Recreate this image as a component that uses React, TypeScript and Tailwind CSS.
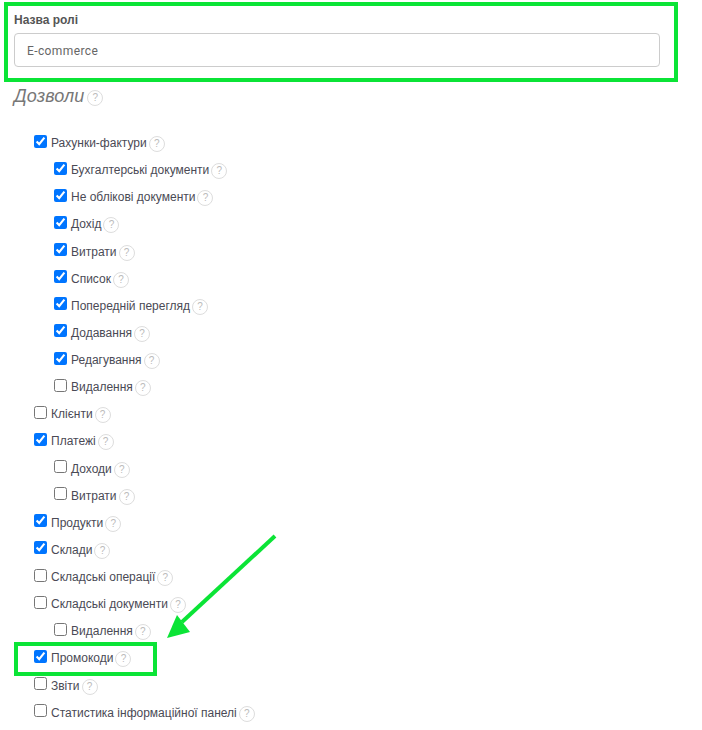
import { useState } from 'react';

type Permiso = { nombre: string; marcado?: boolean; nivel?: 1 };

const permisos: Permiso[] = [
  { nombre: 'Рахунки-фактури', marcado: true },
  { nombre: 'Бухгалтерські документи', marcado: true, nivel: 1 },
  { nombre: 'Не облікові документи', marcado: true, nivel: 1 },
  { nombre: 'Дохід', marcado: true, nivel: 1 },
  { nombre: 'Витрати', marcado: true, nivel: 1 },
  { nombre: 'Список', marcado: true, nivel: 1 },
  { nombre: 'Попередній перегляд', marcado: true, nivel: 1 },
  { nombre: 'Додавання', marcado: true, nivel: 1 },
  { nombre: 'Редагування', marcado: true, nivel: 1 },
  { nombre: 'Видалення', nivel: 1 },
  { nombre: 'Клієнти' },
  { nombre: 'Платежі', marcado: true },
  { nombre: 'Доходи', nivel: 1 },
  { nombre: 'Витрати', nivel: 1 },
  { nombre: 'Продукти', marcado: true },
  { nombre: 'Склади', marcado: true },
  { nombre: 'Складські операції' },
  { nombre: 'Складські документи' },
  { nombre: 'Видалення', nivel: 1 },
  { nombre: 'Промокоди', marcado: true },
  { nombre: 'Звіти' },
  { nombre: 'Статистика інформаційної панелі' },
];

function Ayuda() {
  return (
    <span className="mt-[2px] ml-[2px] flex h-4 w-4 shrink-0 items-center justify-center rounded-full border border-[#dddddd] text-[10px] leading-none text-[#bbbbbb]">
      ?
    </span>
  );
}

function Fila({ permiso }: { permiso: Permiso }) {
  const [marcado, setMarcado] = useState(!!permiso.marcado);
  return (
    <div className={`relative flex h-[27.14px] items-center ${permiso.nivel ? 'pl-5' : ''}`}>
      {permiso.nombre === 'Промокоди' && (
        <span className="absolute top-[-3px] left-[-20px] h-[34px] w-[143px] border-4 border-[#0be436]" />
      )}
      <input
        type="checkbox"
        checked={marcado}
        onChange={(e) => setMarcado(e.target.checked)}
        className="m-0 mb-[4px] h-[13px] w-[13px] shrink-0"
      />
      <span className="ml-1 text-[12px] whitespace-nowrap text-[#4a4a55]">{permiso.nombre}</span>
      <Ayuda />
    </div>
  );
}

export default function App() {
  return (
    <div className="relative h-[730px] w-[702px] overflow-hidden bg-white font-['Liberation_Sans',Arial,sans-serif]">
      <div className="mt-[2px] ml-1 h-20 w-[674px] border-4 border-[#0be436] pt-[6px] pl-[6px]">
        <label className="block text-[12px] leading-4 font-bold text-[#555555]">Назва ролі</label>
        <input
          type="text"
          defaultValue="E-commerce"
          className="mt-[5px] h-[34px] w-[646px] rounded border border-[#cccccc] px-3 pt-[2px] font-['Roboto',sans-serif] text-[12px] tracking-[0.4px] text-[#666666] outline-none"
        />
      </div>

      <div className="mt-[2px] ml-[14px] flex h-6 items-center">
        <h2 className="text-[18px] font-normal tracking-[0.1px] text-[#777777] italic">Дозволи</h2>
        <span className="mt-[2px] ml-px flex">
          <Ayuda />
        </span>
      </div>

      <div className="mt-[21.5px] ml-[34px]">
        {permisos.map((p, i) => (
          <Fila key={i} permiso={p} />
        ))}
      </div>

      <svg className="absolute top-[530px] left-[160px]" width="125" height="115" viewBox="0 0 125 115">
        <path d="M115 6 L22 92" stroke="#0be436" strokeWidth="4" fill="none" />
        <path d="M7 108 L17 85 L30 102 Z" fill="#0be436" />
      </svg>
    </div>
  );
}
